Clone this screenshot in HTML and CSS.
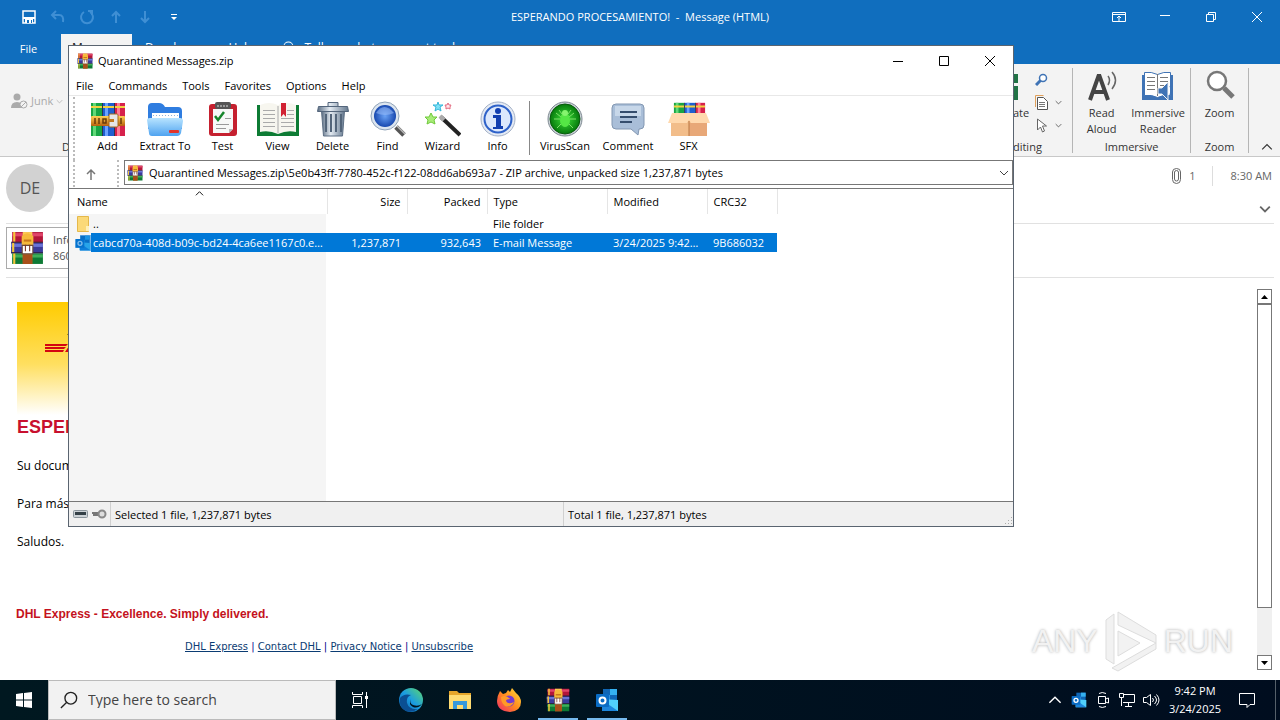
FILE: index.html
```html
<!DOCTYPE html>
<html lang="en">
<head>
  <meta charset="UTF-8">
  <title>Desktop</title>
  <link rel="stylesheet" href="styles.css">
</head>
<body>
  <!-- Shared icons -->
  <svg class="symbols" aria-hidden="true">
    <defs>
      <linearGradient id="gold" x1="0" y1="0" x2="0" y2="1"><stop offset="0" stop-color="#ffd257"/><stop offset="1" stop-color="#b8600c"/></linearGradient>
      <linearGradient id="folderBlue" x1="0" y1="0" x2="0" y2="1"><stop offset="0" stop-color="#b8e4ff"/><stop offset="1" stop-color="#4fa3f0"/></linearGradient>
      <linearGradient id="metal" x1="0" y1="0" x2="1" y2="0"><stop offset="0" stop-color="#5d6f84"/><stop offset=".4" stop-color="#e4ebf2"/><stop offset="1" stop-color="#64788e"/></linearGradient>
      <radialGradient id="lens"><stop offset="0" stop-color="#6aa2f5"/><stop offset="1" stop-color="#1849b0"/></radialGradient>
      <radialGradient id="virus"><stop offset="0" stop-color="#3fe03a"/><stop offset="1" stop-color="#067a0c"/></radialGradient>
      <linearGradient id="edge" x1="0" y1="1" x2="1" y2="0"><stop offset="0" stop-color="#0c59a4"/><stop offset=".5" stop-color="#1b9de2"/><stop offset="1" stop-color="#5fd96a"/></linearGradient>
      <linearGradient id="fire" x1="1" y1="0" x2="0" y2="1"><stop offset="0" stop-color="#ffe23a"/><stop offset=".5" stop-color="#ff8a1f"/><stop offset="1" stop-color="#f0246e"/></linearGradient>
    </defs>
    <symbol id="rar" viewBox="0 0 32 32">
      <path fill="#b3163a" d="M2 1h29v10H2z"/><path fill="#e0456a" d="M2 2h29v3H2z"/>
      <path fill="#3a3b9c" d="M1 11h30v10H1z"/><path fill="#6a74d6" d="M1 12h30v3H1z"/>
      <path fill="#0e7a35" d="M2 21h29v10H2z"/><path fill="#3fae5a" d="M2 22h29v3H2z"/>
      <path fill="#f4c63a" d="M3 1h2v9H3zM2 11h2v9H2zM3 21h2v10H3z"/>
      <path fill="#2a1c3a" d="M1 10h30v1H1zM1 20h30v1H1z"/>
      <path fill="url(#gold)" d="M12 1h9v30h-9z"/><path fill="#a8501a" d="M12 22h9v9h-9z"/>
      <path fill="#f6b93b" d="M11 5q5-6 11 0v8H11z"/><path fill="#c9781c" d="M13 8h7v2h-7z"/>
      <path fill="#fff" stroke="#6b4a3a" d="M11.500 13.500h10v8h-10z"/><path fill="#7c3422" d="M14 13h1v6h-1zM18 13h1v6h-1z"/>
    </symbol>
    <symbol id="outlook" viewBox="0 0 24 24">
      <path fill="#1066b5" d="M8 1h14v11H8z"/><path fill="#35b1f0" d="M15 1h7v6h-7z"/><path fill="#2a8bdc" d="M8 7h7v7H8z"/>
      <path fill="#50d0fa" d="M7 11l16 1v11H7z"/><path fill="#1d86dc" d="M7 12l16 11H7z"/>
      <rect x="1" y="6" width="13" height="13" rx="1" fill="#0a6cc4"/><circle cx="7.500" cy="12.500" r="3" fill="none" stroke="#fff" stroke-width="2"/>
    </symbol>
    <symbol id="books" viewBox="0 0 36 36">
      <path fill="#18a544" d="M1 2h11v33H1z"/><path fill="#62d878" d="M3 2h3v33H3z"/>
      <path fill="#1f5fd0" d="M13 2h11v33H13z"/><path fill="#6ba3ff" d="M15 2h3v33h-3z"/>
      <path fill="#d6214c" d="M25 2h10v33H25z"/><path fill="#ff7c96" d="M27 2h3v33h-3z"/>
      <path fill="#f3d13f" d="M1 5h34v2H1z"/><path fill="#2a3550" d="M12 2h1v33h-1zM24 2h1v33h-1z"/>
    </symbol>
    <symbol id="chevron" viewBox="0 0 10 10"><path fill="none" stroke="currentColor" d="M1 3l4 4 4-4"/></symbol>
    <symbol id="glass" viewBox="0 0 20 20"><circle cx="12" cy="8" r="6.500" fill="none" stroke="currentColor" stroke-width="1.500"/><path fill="none" stroke="currentColor" stroke-width="1.500" d="M7.500 12.500L1 19"/></symbol>
  </svg>

  <div class="desktop">
    <!-- Outlook message window -->
    <main class="mail">
      <header class="mail-title">
        <div class="quick">
          <button aria-label="Save"><svg width="16" height="16" viewBox="0 0 16 16"><path fill="none" stroke="#fff" stroke-width="1.500" d="M2 2h12v12H2z"/><path fill="#fff" d="M2 8h12v2H2zM4 10h8v4H4z"/><path fill="#106ebe" d="M6 11h2v3H6zM10 11h1v3h-1z"/></svg></button>
          <button class="dim" aria-label="Undo"><svg width="16" height="16" viewBox="0 0 16 16"><path d="M6 2L2 6l4 4M2 6h7q5 0 4 7"/></svg></button>
          <button class="dim" aria-label="Redo"><svg width="16" height="16" viewBox="0 0 16 16"><path d="M5 3a6 6 0 1 0 6 0M9 2h4v4"/></svg></button>
          <button class="dim" aria-label="Previous"><svg width="16" height="16" viewBox="0 0 16 16"><path d="M8 14V3M4 7l4-4 4 4"/></svg></button>
          <button class="dim" aria-label="Next"><svg width="16" height="16" viewBox="0 0 16 16"><path d="M8 2v11M4 9l4 4 4-4"/></svg></button>
          <button aria-label="Customize toolbar"><svg width="8" height="8" viewBox="0 0 8 8"><path fill="#fff" d="M1 1h6v1H1zM1 4h6L4 7z"/></svg></button>
        </div>
        <h1>ESPERANDO PROCESAMIENTO!&nbsp; -&nbsp; Message (HTML)</h1>
        <div class="controls">
          <button aria-label="Ribbon options"><svg width="14" height="12" viewBox="0 0 14 12"><path fill="none" stroke="#fff" d="M.5 1.500h13v9H.5zM.5 3.500h13M7 10V5M5 7l2-2 2 2"/></svg></button>
          <button aria-label="Minimize"><svg width="10" height="12" viewBox="0 0 10 12"><path stroke="#fff" d="M0 4.500h10"/></svg></button>
          <button aria-label="Restore"><svg width="12" height="12" viewBox="0 0 12 12"><path fill="none" stroke="#fff" d="M1.500 3.500h7v7h-7zM3.500 3V1.500h7v7H9"/></svg></button>
          <button aria-label="Close"><svg width="12" height="12" viewBox="0 0 12 12"><path stroke="#fff" d="M1 1l10 10M11 1L1 11"/></svg></button>
        </div>
      </header>

      <nav class="tabs">
        <button>File</button>
        <button class="active">Message</button>
        <button>Developer</button>
        <button>Help</button>
        <button class="tell"><svg width="14" height="14"><use href="#glass"/></svg>Tell me what you want to do</button>
      </nav>

      <section class="ribbon">
        <div class="group junk">
          <button><svg width="17" height="16" viewBox="0 0 17 16"><circle cx="6" cy="4" r="3.500" fill="#aaa"/><path fill="#aaa" d="M0 15q0-6 6-6t6 6z"/><circle cx="12.500" cy="11.500" r="3.500" fill="#f3f3f3" stroke="#aaa"/><path stroke="#aaa" d="M10 14l5-5"/></svg>Junk<svg width="7" height="7"><use href="#chevron" width="7" height="7"/></svg></button>
          <span class="group-name">Delete</span>
        </div>
        <div class="spacer"></div>
        <div class="group">
          <div class="tools">
            <button class="big"><svg width="32" height="32" viewBox="0 0 32 32"><path fill="#217346" d="M4 4h25v9H4zM14 16h15v14H14z"/></svg>Translate</button>
            <div class="small">
              <button aria-label="Find"><svg class="find" width="13" height="13" viewBox="0 0 13 13"><circle cx="8" cy="5" r="3.500" fill="#fff" stroke="#3f73b5" stroke-width="1.500"/><path stroke="#3f73b5" stroke-width="3" d="M5.500 7.500L1 12"/></svg></button>
              <button aria-label="Related"><svg width="13" height="15" viewBox="0 0 13 15"><path fill="none" stroke="#e0a05a" d="M.5 12V.5h8"/><path fill="#fff" stroke="#555" d="M2.500 2.500h6l4 4v8h-10z"/><path stroke="#777" d="M4 7.500h6M4 9.500h6M4 11.500h6"/></svg><svg width="7" height="7"><use href="#chevron" width="7" height="7"/></svg></button>
              <button aria-label="Select"><svg width="13" height="15" viewBox="0 0 13 15"><path fill="#fff" stroke="#666" d="M2.500 1v11l3-3 2 5 2-1-2-5h4z"/></svg><svg width="7" height="7"><use href="#chevron" width="7" height="7"/></svg></button>
            </div>
          </div>
          <span class="group-name">Editing</span>
        </div>
        <div class="group">
          <div class="tools">
            <button class="big"><svg width="32" height="32" viewBox="0 0 32 32"><path fill="none" stroke="#444" stroke-width="4" d="M4 30L12.500 6h1L22 30M7 22h12"/><path fill="none" stroke="#666" stroke-width="1.500" d="M22 6q3 4 0 9M26 2q7 8 0 17"/></svg>Read<br>Aloud</button>
            <button class="big"><svg width="32" height="32" viewBox="0 0 32 32"><path fill="#3f73b5" d="M0 5h31v25H0z"/><path fill="#fff" stroke="#3f73b5" d="M2.500 2.500q7-1 13 2 6-3 13-2v23q-7-1-13 2-6-3-13-2z"/><path stroke="#777" d="M15.500 4v22M5 7.500h8M5 11.500h8M5 15.500h8M5 19.500h8M18 7.500h8M18 11.500h8M18 15.500h5"/><path fill="#3f73b5" stroke="#f3f3f3" d="M16 18h4l6-6v18l-6-6h-4z"/><path fill="none" stroke="#3f73b5" stroke-width="1.500" d="M28 16q3 4 0 9"/></svg>Immersive<br>Reader</button>
          </div>
          <span class="group-name">Immersive</span>
        </div>
        <div class="group">
          <div class="tools">
            <button class="big"><svg width="32" height="32" viewBox="0 0 32 32"><circle cx="13" cy="11" r="9" fill="#fff" stroke="#777" stroke-width="2.500"/><path stroke="#777" stroke-width="5" d="M20 18l9 9"/></svg>Zoom</button>
          </div>
          <span class="group-name">Zoom</span>
        </div>
        <button class="collapse" aria-label="Collapse ribbon"><svg width="12" height="12"><use href="#chevron"/></svg></button>
      </section>

      <section class="sender">
        <span class="avatar">DE</span>
        <div class="info">
          <svg width="9" height="16" viewBox="0 0 9 16"><path fill="none" stroke="#666" d="M6.500 4v7a2 2 0 0 1-4 0V4M2.500 4.500a2 2 0 0 1 4 0M.5 4v7.500a4 4 0 0 0 8 0V4a4 3.500 0 0 0-8 0"/></svg>
          <span class="count">1</span>
          <time>8:30 AM</time>
        </div>
        <button class="expand" aria-label="Expand header"><svg width="12" height="12" viewBox="0 0 10 10" stroke-width="1.500"><use href="#chevron"/></svg></button>
      </section>

      <section class="attachments">
        <button>
          <svg width="34" height="34"><use href="#rar"/></svg>
          <span>Información.rar<br>860 KB</span>
        </button>
      </section>

      <section class="message">
        <article>
          <div class="banner"><svg width="120" height="30" viewBox="0 0 120 30"><path fill="#d40511" d="M0 14h23l-2 2H0zM0 17h21l-2 2H0zM0 20h19l-1 2H0zM20 22l6-9h12l-6 9z"/><path fill="#7a5a00" d="M22 5l3-4v4z"/></svg></div>
          <h2>ESPERANDO PROCESAMIENTO!</h2>
          <p>Su documento está listo.</p>
          <p>Para más información, abra el archivo adjunto.</p>
          <p>Saludos.</p>
          <strong>DHL Express - Excellence. Simply delivered.</strong>
          <div class="links"><a href="#">DHL Express</a> | <a href="#">Contact DHL</a> | <a href="#">Privacy Notice</a> | <a href="#">Unsubscribe</a></div>
        </article>
        <div class="scrollbar">
          <button aria-label="Scroll up"><svg width="7" height="4"><path d="M0 4h7L3.500 0z"/></svg></button>
          <div class="thumb"></div>
          <button aria-label="Scroll down"><svg width="7" height="4"><path d="M0 0h7L3.500 4z"/></svg></button>
        </div>
      </section>

      <div class="watermark">
        <span>ANY</span>
        <svg width="60" height="66" viewBox="0 0 60 66"><path d="M17 4v13L55 35V27zM5 12l8-6v50l-8-5zM17 23v25l22-13zM11 60l6 3 38-22v-6z"/></svg>
        <span>RUN</span>
      </div>
    </main>

    <!-- Archive window -->
    <section class="archive">
      <header class="archive-title">
        <svg width="16" height="16"><use href="#rar"/></svg>
        <h2>Quarantined Messages.zip</h2>
        <div class="controls">
          <button aria-label="Minimize"><svg width="12" height="12" viewBox="0 0 12 12"><path stroke="#000" d="M1 6.500h10"/></svg></button>
          <button aria-label="Maximize"><svg width="12" height="12" viewBox="0 0 12 12"><path fill="none" stroke="#000" d="M1.500 1.500h9v9h-9z"/></svg></button>
          <button aria-label="Close"><svg width="12" height="12" viewBox="0 0 12 12"><path stroke="#000" d="M1 1l10 10M11 1L1 11"/></svg></button>
        </div>
      </header>
      <nav class="menu">
        <button>File</button><button>Commands</button><button>Tools</button><button>Favorites</button><button>Options</button><button>Help</button>
      </nav>

      <div class="bars">
        <div class="toolbar">
          <button><svg width="36" height="36" viewBox="0 0 36 36"><use href="#books"/><rect x="1" y="15" width="34" height="10" rx="1" fill="url(#gold)"/><path fill="none" stroke="#6b3b08" stroke-width="1.500" d="M5 17v6M9 17v6M13 18h3v4h-3zM31 17v6"/><rect x="19" y="13" width="9" height="13" rx="1" fill="#e6e6e6" stroke="#a46a20"/><path fill="#c27a20" d="M19 18h5v3h-5z"/></svg>Add</button>
          <button class="wide"><svg width="36" height="36" viewBox="0 0 36 36"><path fill="#2f7de0" d="M1 6q0-4 4-4h7q4 0 6 4h13q4 0 4 4v18H1z"/><path fill="#fff" d="M5 12h27v15H5z"/><path stroke="#8fb2d8" stroke-dasharray="1 2" d="M6 14.500h26"/><path fill="url(#folderBlue)" d="M0 19q0-2 3-2h30q3 0 3 3l-2 12q-1 3-4 3H5q-3 0-3-3z"/><rect x="22" y="29" width="10" height="3" rx="1" fill="#e3342a"/></svg>Extract To</button>
          <button><svg width="36" height="36" viewBox="0 0 36 36"><rect x="4" y="3" width="28" height="32" rx="3" fill="#c5202f"/><path fill="#f7f8f7" d="M8 8h20v20l-4 4H8z"/><path fill="#bbb" d="M28 28h-4v4z"/><rect x="10" y="1" width="16" height="7" rx="2" fill="#555"/><path stroke="#ddd" stroke-dasharray="2 1" d="M12 5h12"/><path fill="none" stroke="#16862b" stroke-width="2.500" d="M10 15l3 4 6-8"/><path stroke="#999" d="M20 17.500h6M11 23.500h13M11 27.500h10"/></svg>Test</button>
          <button><svg width="42" height="36" viewBox="0 0 42 36"><path fill="#0d7b34" d="M0 4h42v31H0z"/><path fill="#f7f6ef" d="M3 4q9-4 18 0 9-4 18 0v27q-9-2-18 2-9-4-18-2z"/><path stroke="#aaa" d="M21 5v27M6 9.500h12M6 13.500h12M6 17.500h12M6 21.500h12M6 25.500h12M30 9.500h7M30 13.500h7M24 17.500h13M24 21.500h13M24 25.500h13"/><path fill="#d12233" d="M24 2h5v14l-2.500-3-2.500 3z"/></svg>View</button>
          <button><svg width="36" height="36" viewBox="0 0 36 36"><path fill="url(#metal)" stroke="#5d6f84" d="M6.500 10h23l-2 25h-19z"/><path stroke="#53657a" stroke-width="2" d="M11 13v18M16 13v18M21 13v18M26 13v18"/><path fill="url(#metal)" stroke="#54667c" d="M3.500 5.500h29l1 5h-31zM13 5V1.500h10V5"/></svg>Delete</button>
          <button><svg width="36" height="36" viewBox="0 0 36 36"><path stroke="#555" stroke-width="5" d="M26 26l8 8"/><path stroke="#bbb" stroke-width="1.500" d="M27 25l8 8"/><circle cx="15" cy="15" r="14" fill="#dce5ef" stroke="#91a4b9"/><circle cx="15" cy="15" r="11" fill="url(#lens)"/><path fill="#a5c8ff" opacity=".5" d="M6 12q8-12 18 0-9 4-18 0z"/></svg>Find</button>
          <button><svg width="36" height="36" viewBox="0 0 36 36"><path stroke="#222" stroke-width="4" d="M16 16l19 18"/><path stroke="#aaa" stroke-width="4" d="M15 15l4 4"/><path fill="#a8ec78" stroke="#70c93c" d="M6 12l2 4h4l-3 3 1 4-4-2-4 2 1-4-3-3h4z"/><path fill="#7fe2f7" stroke="#35b6da" d="M13 1l1 3h4l-3 2 1 4-3-2-3 2 1-4-3-2h4z"/><path fill="#ffe5ea" stroke="#e36b80" d="M23 2l1 2h2l-1 2v2l-2-1-2 1v-2l-1-2h2z"/></svg>Wizard</button>
          <button><svg width="36" height="36" viewBox="0 0 36 36"><circle cx="18" cy="18" r="17" fill="#e5ebf5" stroke="#a4b1c6"/><circle cx="18" cy="18" r="13.500" fill="#dce8fc" stroke="#2e62c9" stroke-width="2"/><circle cx="18" cy="10" r="3" fill="#123fb0"/><path fill="#123fb0" d="M13 14h8v11h2v3H13v-2h3v-9h-3z"/></svg>Info</button>
          <span class="divider"></span>
          <button class="wide"><svg width="36" height="36" viewBox="0 0 36 36"><circle cx="18" cy="18" r="17" fill="#ccd3d9" stroke="#7d8890"/><circle cx="18" cy="18" r="15" fill="url(#virus)" stroke="#075a0b"/><path fill="none" stroke="#7fe06a" d="M12 9l3 4M24 9l-3 4M7 18h6M29 18h-6M10 27l4-4M26 27l-4-4M9 12l5 4M27 12l-5 4"/><ellipse cx="18" cy="19" rx="5" ry="7" fill="#55e645"/><circle cx="18" cy="12" r="3" fill="#86f56e"/></svg>VirusScan</button>
          <button class="widest"><svg width="36" height="36" viewBox="0 0 36 36"><path fill="#a9bed8" stroke="#8297b2" d="M6 3h24q4 0 4 4v17q0 4-4 4h-1l-1 6-7-6H6q-4 0-4-4V7q0-4 4-4z"/><path fill="#dce8f5" opacity=".6" d="M5 5h26v10H5z"/><path stroke="#354d6d" stroke-width="2" d="M10 11h17M10 16h17M10 21h12"/></svg>Comment</button>
          <button><svg width="42" height="36" viewBox="0 0 42 36"><svg x="5" y="0" width="33" height="33"><use href="#books"/></svg><path fill="#f2bd8a" d="M3 16h36v19H3z"/><path fill="#e8a878" d="M21 22h18v13H21z"/><path fill="#ffd9ae" d="M4 12h34l4 10H23l-2-3-2 3H0z"/><path stroke="#b97742" d="M21 20v15"/></svg>SFX</button>
        </div>
        <div class="address">
          <button class="up" aria-label="Up one level"><svg width="12" height="12" viewBox="0 0 12 12"><path fill="none" stroke="#777" stroke-width="1.500" d="M6 12V2M2 6l4-4 4 4"/></svg></button>
          <div class="path">
            <svg width="16" height="16"><use href="#rar"/></svg>
            <input type="text" aria-label="Path" value="Quarantined Messages.zip\5e0b43ff-7780-452c-f122-08dd6ab693a7 - ZIP archive, unpacked size 1,237,871 bytes">
            <svg width="10" height="10" color="#444"><use href="#chevron"/></svg>
          </div>
        </div>
      </div>

      <div class="files">
        <table>
          <colgroup><col class="c-name"><col class="c-num"><col class="c-num"><col class="c-type"><col class="c-mod"><col class="c-crc"></colgroup>
          <thead>
            <tr><th class="sorted">Name<svg width="9" height="9"><use href="#chevron"/></svg></th><th class="num">Size</th><th class="num">Packed</th><th>Type</th><th>Modified</th><th>CRC32</th></tr>
          </thead>
          <tbody>
            <tr>
              <td class="name"><div><svg width="16" height="16" viewBox="0 0 16 16"><path fill="#fbd978" stroke="#e5b84a" d="M2.500.5h11v15h-11z"/><path fill="#fff0b8" d="M11 10h3v5h-3z"/></svg><span>..</span></div></td>
              <td></td><td></td><td>File folder</td><td></td><td></td>
            </tr>
            <tr class="selected">
              <td class="name"><div><svg width="16" height="16" viewBox="0 0 16 16"><use href="#outlook"/><path fill="#0078d7" opacity=".5" d="M5 0h11v16H5zM0 4h5v9H0z"/></svg><span>cabcd70a-408d-b09c-bd24-4ca6ee1167c0.eml</span></div></td>
              <td class="num">1,237,871</td><td class="num">932,643</td><td>E-mail Message</td><td>3/24/2025 9:42 PM</td><td>9B686032</td>
            </tr>
          </tbody>
        </table>
      </div>

      <footer class="status">
        <svg width="34" height="12" viewBox="0 0 34 12"><rect x=".5" y="2.500" width="14" height="7" rx="1" fill="#ccd2d6" stroke="#8b959c"/><path fill="#344047" d="M2 4h11v3H2z"/><path fill="none" stroke="#777" stroke-width="2" d="M19 5h6M20 7h5"/><circle cx="29" cy="6" r="3.500" fill="#ddd" stroke="#888" stroke-width="2"/></svg>
        <span>Selected 1 file, 1,237,871 bytes</span>
        <span>Total 1 file, 1,237,871 bytes</span>
        <svg class="resize" width="10" height="10" viewBox="0 0 10 10"><path fill="#aaa" d="M8 1h1v1H8zM5 4h1v1H5zM8 4h1v1H8zM2 7h1v1H2zM5 7h1v1H5zM8 7h1v1H8z"/></svg>
      </footer>
    </section>

    <footer class="taskbar">
      <button class="start" aria-label="Start"><svg width="16" height="16" viewBox="0 0 16 16"><path fill="#fff" d="M0 2l7-1v6.500H0zM8 1l8-1v7.500H8zM0 8.500h7V15l-7-1zM8 8.500h8V16l-8-1z"/></svg></button>
      <label class="search"><svg width="18" height="18" viewBox="0 0 20 20"><use href="#glass"/></svg><input type="text" placeholder="Type here to search" aria-label="Search"></label>
      <div class="apps">
        <button aria-label="Task view" class="taskview"><svg width="18" height="18" viewBox="0 0 18 18"><path fill="none" stroke="#fff" d="M2.500 5.500h8v7h-8zM1.500 1v2.500h10V1M1.500 17v-2.500h10V17M15.500 1v16"/><path fill="#fff" d="M14 5h3v3h-3z"/></svg></button>
        <button aria-label="Edge"><svg width="24" height="24" viewBox="0 0 24 24"><circle cx="12" cy="12" r="12" fill="url(#edge)"/><path fill="#0b4f93" d="M1 10q4-5 11-3-5 2-4 8 2 7 11 6-9 6-16-1-3-4-2-10z"/><path fill="#001420" d="M12 11q-2 4 2 6 5 2 9-1-4 5-9 3-5-3-2-8z"/></svg></button>
        <button aria-label="File Explorer"><svg width="22" height="22" viewBox="0 0 22 22"><path fill="#e6a62a" d="M0 2h8l2 2h12v6H0z"/><path fill="#ffdc72" d="M0 6h22v14H0z"/><path fill="#3799dd" d="M4 20v-8h14v8h-4v-4H8v4z"/></svg></button>
        <button aria-label="Firefox"><svg width="24" height="24" viewBox="0 0 24 24"><path fill="url(#fire)" d="M3 3l3 3 3-1 2-3 2 2 2-4 4 5q5 4 5 9 0 9-11 10Q0 23 0 13 0 8 3 3z"/><circle cx="12" cy="13" r="5.500" fill="#743bd0"/><path fill="#ff9a28" d="M4 9q5-3 9 2-4 0-4 2 2 4 8 1-3 6-9 4-4-3-4-9z"/></svg></button>
        <button aria-label="WinRAR" class="running"><svg width="24" height="24"><use href="#rar"/></svg></button>
        <button aria-label="Outlook" class="running"><svg width="24" height="24"><use href="#outlook"/></svg></button>
      </div>
      <div class="tray">
        <button aria-label="Hidden icons"><svg width="14" height="14" class="flip"><use href="#chevron"/></svg></button>
        <button aria-label="Outlook"><svg width="16" height="16"><use href="#outlook"/></svg></button>
        <button aria-label="Camera"><svg width="14" height="16" viewBox="0 0 14 16"><path fill="none" stroke="#fff" d="M2.500 4.500h7v7h-7zM9.500 7l3-1v5l-3-1M3 1.500q3-2 7 0M3 14.500q3 2 7 0"/></svg></button>
        <button aria-label="Network"><svg width="18" height="16" viewBox="0 0 18 16"><path fill="none" stroke="#fff" d="M5 2.500h11.500v8H5M10.500 11v3M7 14.500h7M1.500 1.500h4v4h-4zM3.500 6v8"/></svg></button>
        <button aria-label="Volume"><svg width="18" height="16" viewBox="0 0 18 16"><path fill="none" stroke="#fff" d="M1.500 5.500h3l4-3v11l-4-3h-3zM10.500 6q2 2 0 4M12.500 4q4 4 0 8M14.500 2.500q5 5.500 0 11"/></svg></button>
        <time class="clock">9:42 PM<br>3/24/2025</time>
        <button class="notify" aria-label="Notifications"><svg width="16" height="16" viewBox="0 0 16 16"><path fill="none" stroke="#fff" d="M.5 1.500h15v11H11l-3 3v-3H.5z"/></svg></button>
      </div>
    </footer>
  </div>
</body>
</html>
```
FILE: styles.css
```css
* {
  box-sizing: border-box;
  margin: 0;
  padding: 0;
}

body {
  font-family: "Open Sans", "Noto Sans", sans-serif;
  font-size: 11px;
  line-height: 16px;
  color: #000;
}

button {
  border: none;
  background: none;
  font: inherit;
  color: inherit;
  display: flex;
  align-items: center;
  justify-content: center;
}

input {
  border: none;
  background: none;
  outline: none;
  font: inherit;
  color: inherit;
}

svg {
  flex-shrink: 0;
}

.symbols {
  position: absolute;
  width: 0;
  height: 0;
}

.desktop {
  position: relative;
  display: flex;
  flex-direction: column;
  height: 100vh;
  overflow: hidden;
}

/* Outlook window */
.mail {
  position: relative;
  flex: 1;
  min-height: 0;
  display: flex;
  flex-direction: column;
  background: #fff;
}

.mail-title {
  display: grid;
  grid-template-columns: 1fr auto 1fr;
  align-items: center;
  height: 34px;
  background: #106ebe;
  color: #fff;
}

.mail-title h1 {
  font-size: 11px;
  font-weight: 400;
}

.quick {
  display: flex;
  padding-left: 14px;
}

.quick button {
  width: 29px;
  height: 30px;
}

.quick .dim path {
  fill: none;
  stroke: #3f8fd4;
  stroke-width: 2;
}

.controls {
  display: flex;
  justify-content: flex-end;
}

.controls button {
  width: 46px;
  height: 30px;
}

.tabs {
  display: flex;
  height: 30px;
  background: #106ebe;
  color: #fff;
  font-size: 12px;
}

.tabs button {
  padding: 0 13px 3px;
}

.tabs button:first-child {
  width: 61px;
  padding: 0 17px 0 13px;
  font-size: 11px;
}

.tabs .active {
  width: 71px;
  background: #f3f3f3;
  color: #222;
}

.tabs .tell {
  gap: 10px;
}

.ribbon {
  display: flex;
  height: 93px;
  padding: 4px 0 3px;
  background: #f3f3f3;
  border-bottom: 1px solid #c8c8c8;
  color: #333;
}

.group {
  display: flex;
  flex-direction: column;
  justify-content: space-between;
  align-items: center;
  padding: 0 5px;
  border-right: 1px solid #b5b5b5;
}

.group-name {
  line-height: 12px;
}

.junk {
  width: 146px;
  border: none;
  padding: 25px 0 0 11px;
}

.junk button {
  gap: 3px;
  align-self: flex-start;
  color: #aaa;
}

.spacer {
  flex: 1;
}

.tools {
  display: flex;
  gap: 6px;
}

.big {
  flex-direction: column;
  justify-content: flex-start;
  min-width: 47px;
  padding-top: 2px;
}

.big svg {
  margin-bottom: 3px;
}

.small {
  display: flex;
  flex-direction: column;
  width: 32px;
}

.small button {
  height: 23px;
  justify-content: flex-start;
  gap: 7px;
}

.collapse {
  width: 31px;
  align-items: flex-end;
  padding-left: 4px;
}

.collapse svg,
.flip {
  rotate: 180deg;
}

.sender {
  display: grid;
  grid-template-columns: 48px 1fr;
  height: 67px;
  margin: 0 6px;
  border-bottom: 1px solid #e1e1e1;
  color: #666;
}

.avatar {
  grid-row: span 2;
  width: 48px;
  height: 48px;
  margin-top: 7px;
  border-radius: 50%;
  background: #d2d2d2;
  color: #555;
  font-size: 16px;
  line-height: 48px;
  text-align: center;
}

.info {
  display: flex;
  justify-content: flex-end;
  align-items: center;
  gap: 8px;
}

.info time {
  border-left: 1px solid #ddd;
  margin-left: 8px;
  padding: 2px 2px 2px 18px;
}

.expand {
  justify-self: end;
  width: 18px;
}

.attachments {
  height: 54px;
  margin: 0 6px;
  padding-top: 3px;
  border-bottom: 1px solid #e1e1e1;
}

.attachments button {
  width: 200px;
  height: 42px;
  padding-left: 3px;
  justify-content: flex-start;
  gap: 9px;
  border: 1px solid #ababab;
  color: #555;
  text-align: left;
}

.message {
  flex: 1;
  min-height: 0;
  display: flex;
  padding: 11px 8px 10px 16px;
}

.message article {
  flex: 1;
  font-size: 12px;
}

.banner {
  width: 600px;
  height: 113px;
  margin: 13px 0 0 1px;
  padding: 28px;
  background: linear-gradient(#fc0, #ffdf60 55%, #fff);
}

.message h2 {
  padding: 1px;
  margin-bottom: 19px;
  font: bold 18px/22px "Liberation Sans", sans-serif;
  color: #c8102e;
}

.message p {
  margin: 0 0 22px 1px;
}

.message strong {
  display: block;
  margin-top: 56px;
  font: bold 12px/16px "Liberation Sans", sans-serif;
  color: #c41220;
}

.links {
  padding: 17px 0 0 169px;
  font: 10px/16px "DejaVu Sans", sans-serif;
  color: #00008b;
}

.links a {
  color: #0b3c73;
}

.scrollbar {
  display: flex;
  flex-direction: column;
  width: 15px;
  background: #f0f0f0;
}

.scrollbar button {
  height: 15px;
  border: 1px solid #777;
  background: #fff;
}

.thumb {
  height: 304px;
  border: 1px solid #777;
  background: #fff;
}

.scrollbar button:last-child {
  margin-top: auto;
}

.watermark {
  position: absolute;
  right: 47px;
  bottom: 6px;
  display: flex;
  align-items: center;
  gap: 3px;
  font: 32px/66px "Liberation Sans Narrow", "Liberation Sans", sans-serif;
  color: #f2f2f2;
  text-shadow: 0 0 3px #aaa;
}

.watermark path {
  fill: #f2f2f2;
  stroke: #ddd;
}

/* Archive window */
.archive {
  position: absolute;
  top: 45px;
  right: 266px;
  bottom: 193px;
  left: 68px;
  display: flex;
  flex-direction: column;
  background: #fff;
  border: 1px solid #5a6470;
}

.archive-title {
  display: flex;
  align-items: center;
  height: 30px;
  padding-left: 8px;
  gap: 5px;
}

.archive-title h2 {
  flex: 1;
  font-size: 11px;
  font-weight: 400;
}

.menu {
  display: flex;
  height: 19px;
  padding-left: 7px;
  gap: 15px;
}

.bars {
  border-top: 1px solid #e8e8e8;
  padding: 1px 0 1px 4px;
}

.toolbar {
  display: flex;
  padding: 4px 0 0 5px;
  height: 63px;
  border-left: 2px dotted #bbb;
}

.toolbar button {
  flex-direction: column;
  justify-content: flex-start;
  width: 55px;
}

.toolbar svg {
  margin-bottom: 1px;
}

.toolbar .wide {
  width: 60px;
}

.toolbar .widest {
  width: 66px;
}

.divider {
  width: 1px;
  height: 54px;
  margin: 0 5px 0 4px;
  background: #888;
}

.address {
  display: flex;
  height: 27px;
  border-left: 2px dotted #bbb;
}

.up {
  width: 44px;
  padding-right: 10px;
  border-right: 2px dotted #bbb;
}

.path {
  flex: 1;
  display: flex;
  align-items: center;
  gap: 6px;
  height: 25px;
  margin-left: 5px;
  padding: 0 3px 0 2px;
  border: 1px solid #777;
}

.path input {
  flex: 1;
}

.files {
  flex: 1;
  border: 1px solid #777;
  border-width: 1px 0;
  background: linear-gradient(#f5f5f5, #f5f5f5) 0 25px / 257px 100% no-repeat #fff;
}

table {
  table-layout: fixed;
  width: 708px;
  border-collapse: collapse;
}

.c-name {
  width: 258px;
}

.c-num {
  width: 80px;
}

.c-type {
  width: 120px;
}

.c-mod {
  width: 100px;
}

.c-crc {
  width: 70px;
}

th {
  position: relative;
  height: 25px;
  padding: 0 6px;
  border-right: 1px solid #e5e5e5;
  font-weight: 400;
  text-align: left;
}

th.sorted {
  padding-left: 8px;
}

.sorted svg {
  position: absolute;
  top: 0;
  left: 49%;
  rotate: 180deg;
}

td {
  height: 19px;
  padding: 0 6px;
  overflow: hidden;
  white-space: nowrap;
  text-overflow: ellipsis;
}

.num {
  text-align: right;
}

td.name {
  padding: 0;
}

.name div {
  display: flex;
  align-items: center;
  padding-left: 6px;
}

.name span {
  flex: 1;
  padding: 0 2px;
  line-height: 19px;
  overflow: hidden;
  text-overflow: ellipsis;
}

.selected td:not(.name),
.selected span {
  background: #0078d7;
  color: #fff;
}

.status {
  display: flex;
  align-items: center;
  height: 24px;
  padding-left: 4px;
  background: #f0f0f0;
}

.status span {
  flex: 1;
  margin-left: 3px;
  padding: 2px 0 0 4px;
  border-left: 1px solid #d0d0d0;
  line-height: 22px;
}

.status span + span {
  flex: 0 0 440px;
}

.resize {
  align-self: flex-end;
}

/* Taskbar */
.taskbar {
  display: flex;
  height: 40px;
  background: linear-gradient(90deg, #001820, #000d1f);
  color: #fff;
}

.start {
  width: 48px;
}

.search {
  display: flex;
  align-items: center;
  gap: 10px;
  width: 288px;
  padding-left: 11px;
  background: #f2f2f2;
  border: 1px solid #bbb;
  color: #222;
}

.search input {
  flex: 1;
  font-size: 14px;
}

.search input::placeholder {
  color: #444;
}

.apps {
  flex: 1;
  display: flex;
  gap: 1px;
}

.apps button {
  width: 48px;
}

.apps .taskview {
  margin-right: 2px;
}

.apps .running {
  background: linear-gradient(#76b9ed, #76b9ed) 50% 100% / 40px 2px no-repeat;
}

.tray {
  display: flex;
  margin-right: 4px;
  padding-right: 8px;
  border-right: 1px solid #55606a;
}

.tray button {
  width: 24px;
}

.clock {
  width: 64px;
  padding-top: 2px;
  line-height: 18px;
  text-align: center;
}

.tray .notify {
  width: 40px;
}
```
